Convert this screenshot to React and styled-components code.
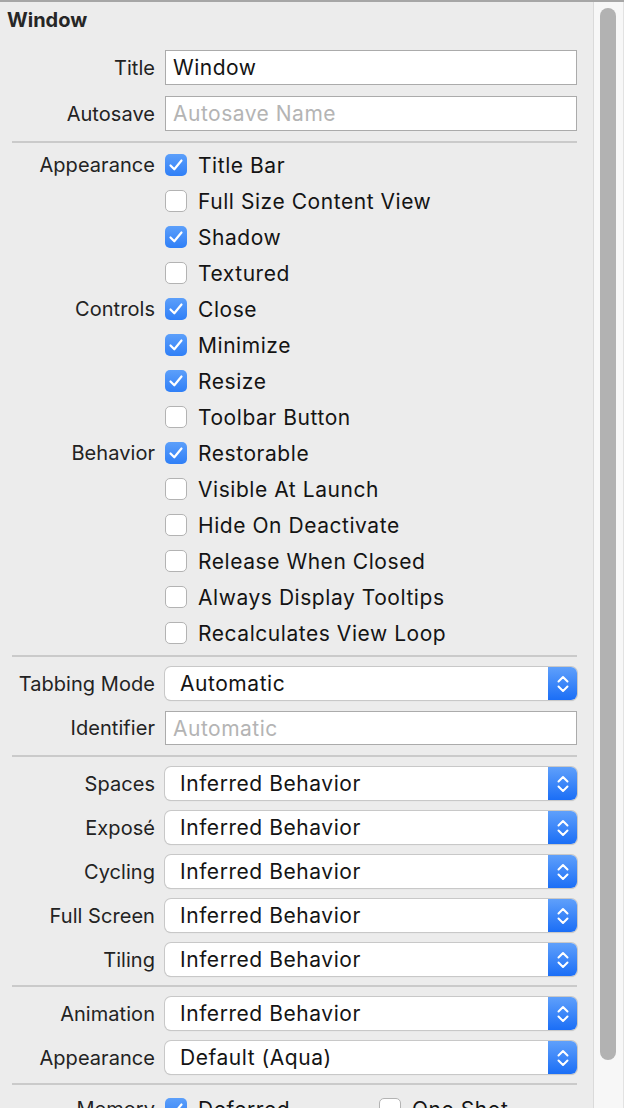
import React from "react";
import styled, { createGlobalStyle } from "styled-components";

const GlobalStyle = createGlobalStyle`
  html, body {
    margin: 0;
    padding: 0;
    background: #ececec;
  }
  body {
    font-family: Inter, "Noto Sans", "Liberation Sans", sans-serif;
    color: #222222;
  }
`;

const Page = styled.div`
  display: flex;
  width: 624px;
  height: 1108px;
  overflow: hidden;
  border-top: 2px solid #a6a6a6;
  box-sizing: border-box;
`;

const Panel = styled.div`
  width: 593px;
  flex: none;
  display: flex;
  flex-direction: column;
  background: #ececec;
`;

const Track = styled.div`
  flex: 1;
  background: #f7f7f7;
  border-left: 1px solid #dadada;
  border-right: 1px solid #e2e2e2;
  padding: 6px 6px 0 6px;
`;

const Thumb = styled.div`
  width: 16px;
  height: 1052px;
  border-radius: 8px;
  background: #b2b2b2;
`;

const Header = styled.div`
  flex: none;
  padding: 7px 0 0 7px;
  height: 48px;
  box-sizing: border-box;
  font-size: 20px;
  font-weight: 700;
  line-height: 22px;
  color: #262626;
`;

const Section = styled.div`
  flex: none;
  display: grid;
  grid-template-columns: 155px 412px;
  column-gap: 10px;
  row-gap: ${({ $gap }) => $gap}px;
  padding: ${({ $top }) => $top}px 0 ${({ $bottom }) => $bottom}px 0;
  align-items: center;
`;

const Separator = styled.div`
  flex: none;
  height: 2px;
  margin: 0 16px 0 12px;
  background: #cacaca;
`;

const Label = styled.div`
  text-align: right;
  font-size: 20px;
  line-height: 24px;
  letter-spacing: 0.05px;
  color: #232323;
  white-space: nowrap;
`;

const TextField = styled.div`
  height: ${({ $h }) => $h || 35}px;
  box-sizing: border-box;
  border: 1px solid #ababab;
  background: #ffffff;
  padding: 0 7px;
  display: flex;
  align-items: center;
  font-size: 21px;
  letter-spacing: 0.5px;
  color: ${({ $placeholder }) => ($placeholder ? "#b4b4b4" : "#141414")};
`;

const Popup = styled.div`
  height: 33px;
  box-sizing: border-box;
  display: flex;
  border-radius: 6px;
  background: #ffffff;
  box-shadow: 0 0 0 1px #c8c8c8, 0 1px 1px rgba(0, 0, 0, 0.18);
  overflow: hidden;
`;

const PopupText = styled.div`
  flex: 1;
  padding-left: 15px;
  display: flex;
  align-items: center;
  font-size: 21px;
  letter-spacing: 0.55px;
  color: #141414;
`;

const Stepper = styled.div`
  width: 29px;
  background: linear-gradient(#5fa0fb, #1b6ef6);
  display: flex;
  align-items: center;
  justify-content: center;
`;

const CheckRow = styled.label`
  height: 36px;
  display: flex;
  align-items: center;
  gap: 11px;
  font-size: 21px;
  letter-spacing: 0.55px;
  color: #141414;
  white-space: nowrap;
`;

const Box = styled.span`
  width: 22px;
  height: 22px;
  box-sizing: border-box;
  border-radius: 5px;
  flex: none;
  display: flex;
  align-items: center;
  justify-content: center;
  background: ${({ $checked }) =>
    $checked ? "linear-gradient(#5c9ffa, #2f7ff7)" : "#ffffff"};
  border: ${({ $checked }) => ($checked ? "none" : "1px solid #b3b3b3")};
`;

const Pair = styled.div`
  display: grid;
  grid-template-columns: 214px 1fr;
`;

const Checkbox = ({ checked, children }) => (
  <CheckRow>
    <Box $checked={checked}>
      {checked && (
        <svg width="22" height="22" viewBox="0 0 22 22">
          <path d="M5.5 11.5 L9.3 15.3 L16.5 6.5" fill="none" stroke="#ffffff" strokeWidth="2.2" strokeLinecap="round" strokeLinejoin="round" />
        </svg>
      )}
    </Box>
    {children}
  </CheckRow>
);

const Select = ({ value }) => (
  <Popup>
    <PopupText>{value}</PopupText>
    <Stepper>
      <svg width="14" height="22" viewBox="0 0 14 22">
        <path d="M2.5 8.5 L7 4 L11.5 8.5" fill="none" stroke="#ffffff" strokeWidth="2" strokeLinecap="round" strokeLinejoin="round" />
        <path d="M2.5 13.5 L7 18 L11.5 13.5" fill="none" stroke="#ffffff" strokeWidth="2" strokeLinecap="round" strokeLinejoin="round" />
      </svg>
    </Stepper>
  </Popup>
);

const checkGroups = [
  {
    label: "Appearance",
    items: [
      ["Title Bar", true],
      ["Full Size Content View", false],
      ["Shadow", true],
      ["Textured", false],
    ],
  },
  {
    label: "Controls",
    items: [
      ["Close", true],
      ["Minimize", true],
      ["Resize", true],
      ["Toolbar Button", false],
    ],
  },
  {
    label: "Behavior",
    items: [
      ["Restorable", true],
      ["Visible At Launch", false],
      ["Hide On Deactivate", false],
      ["Release When Closed", false],
      ["Always Display Tooltips", false],
      ["Recalculates View Loop", false],
    ],
  },
];

const spaceRows = ["Spaces", "Exposé", "Cycling", "Full Screen", "Tiling"];

export default function App() {
  return (
    <>
      <GlobalStyle />
      <Page>
        <Panel>
          <Header>Window</Header>

          <Section $gap={11} $top={0} $bottom={10}>
            <Label>Title</Label>
            <TextField>Window</TextField>
            <Label>Autosave</Label>
            <TextField $placeholder>Autosave Name</TextField>
          </Section>

          <Separator />

          <Section $gap={0} $top={4} $bottom={4}>
            {checkGroups.map((group) =>
              group.items.map(([name, checked], i) => (
                <React.Fragment key={name}>
                  <Label>{i === 0 ? group.label : ""}</Label>
                  <Checkbox checked={checked}>{name}</Checkbox>
                </React.Fragment>
              ))
            )}
          </Section>

          <Separator />

          <Section $gap={11} $top={10} $bottom={10}>
            <Label>Tabbing Mode</Label>
            <Select value="Automatic" />
            <Label>Identifier</Label>
            <TextField $h={34} $placeholder>Automatic</TextField>
          </Section>

          <Separator />

          <Section $gap={11} $top={10} $bottom={9}>
            {spaceRows.map((name) => (
              <React.Fragment key={name}>
                <Label>{name}</Label>
                <Select value="Inferred Behavior" />
              </React.Fragment>
            ))}
          </Section>

          <Separator />

          <Section $gap={11} $top={10} $bottom={9}>
            <Label>Animation</Label>
            <Select value="Inferred Behavior" />
            <Label>Appearance</Label>
            <Select value="Default (Aqua)" />
          </Section>

          <Separator />

          <Section $gap={0} $top={6} $bottom={0}>
            <Label>Memory</Label>
            <Pair>
              <Checkbox checked>Deferred</Checkbox>
              <Checkbox>One Shot</Checkbox>
            </Pair>
          </Section>
        </Panel>
        <Track>
          <Thumb />
        </Track>
      </Page>
    </>
  );
}
